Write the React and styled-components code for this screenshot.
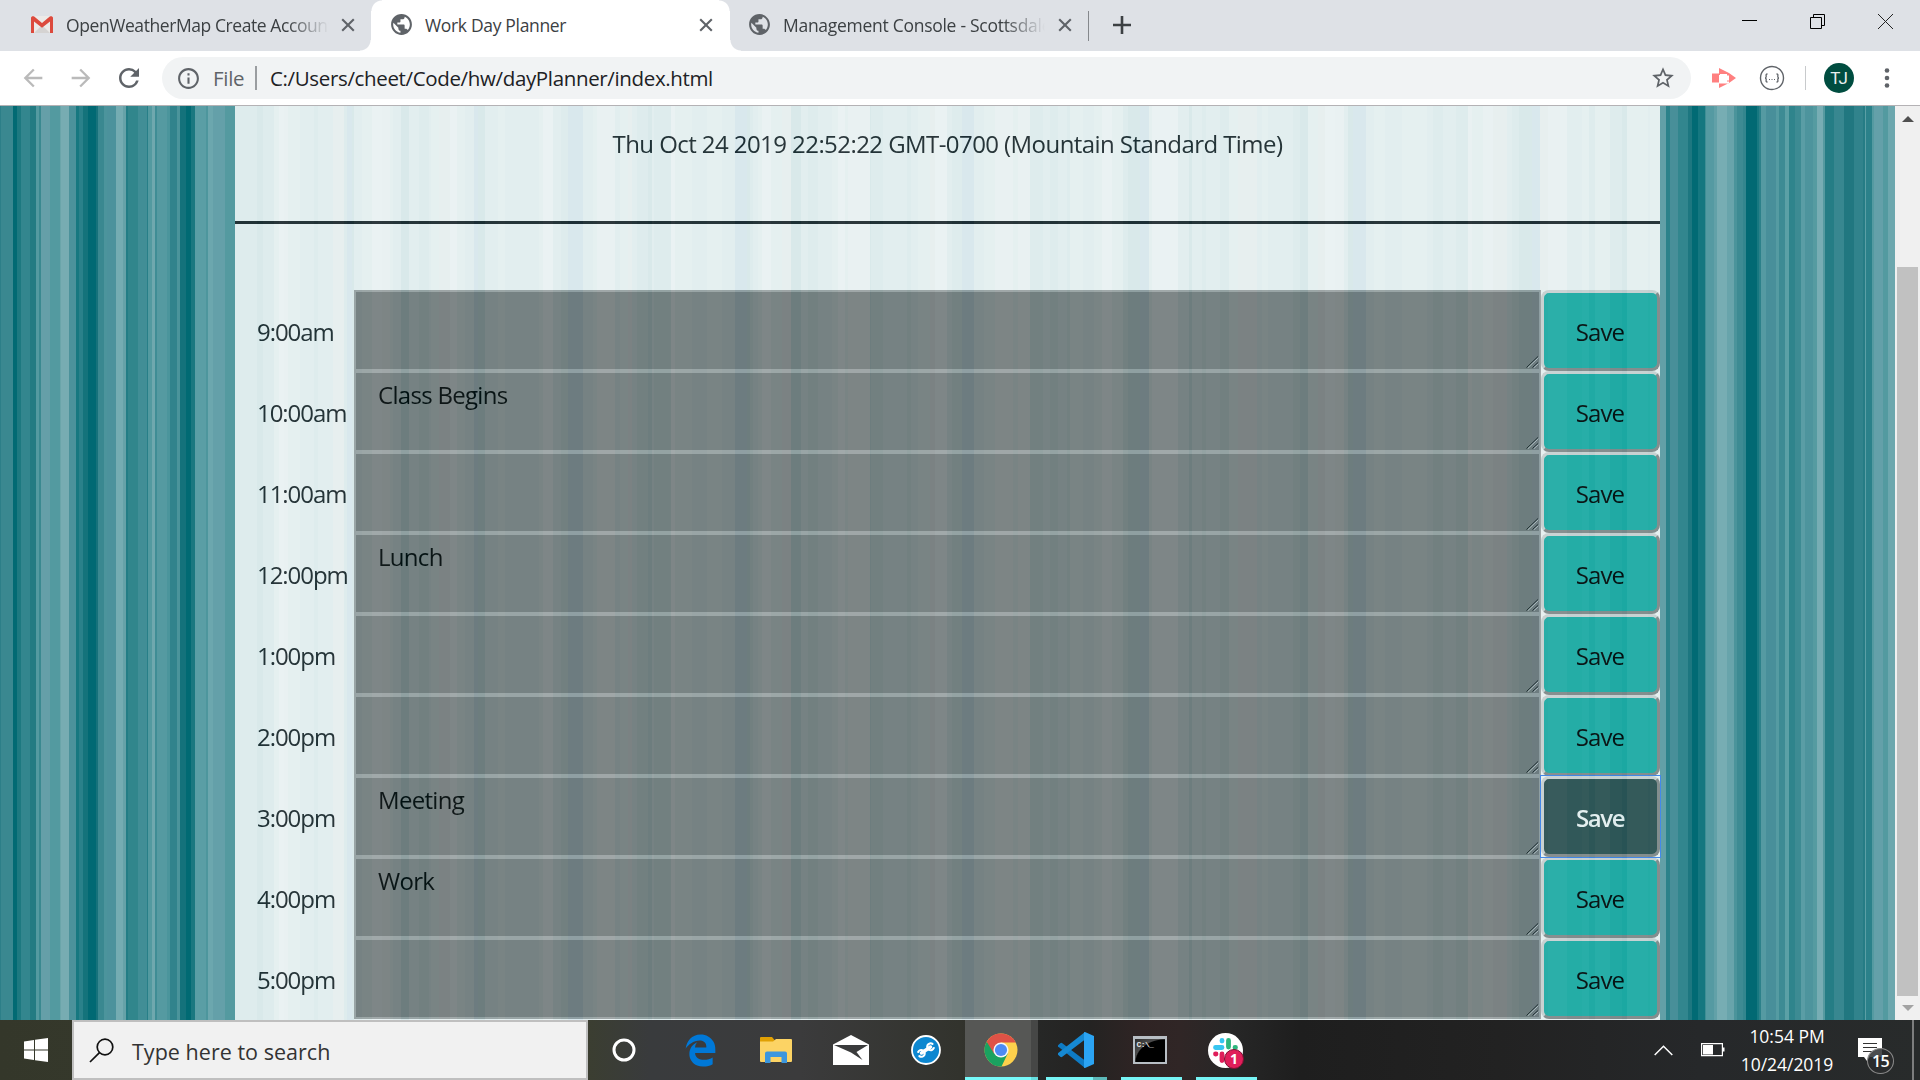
import React from 'react';
import styled, { createGlobalStyle, css } from 'styled-components';
import { MdPublic, MdStarBorder, MdInfoOutline, MdArrowBack, MdArrowForward, MdRefresh } from 'react-icons/md';
import { FaEdgeLegacy } from 'react-icons/fa6';

const GlobalStyle = createGlobalStyle`
  * { box-sizing: border-box; }
  body { margin: 0; overflow: hidden; background: #fff; font-family: "Open Sans", "Noto Sans", sans-serif; }
`;

/* ---------- striped wallpaper ---------- */

const LEFT = [
  [0, '#2c7f88'], [1, '#3a8890'], [13, '#016a73'], [17, '#1d7980'], [21, '#33868e'], [30, '#237b82'],
  [36, '#549aa0'], [39, '#3a8990'], [41, '#659fa8'], [50, '#539aa0'], [60, '#6aa5aa'], [61, '#77acb2'],
  [69, '#4c929b'], [76, '#177880'], [79, '#2a818a'], [83, '#14737b'], [88, '#016973'], [96, '#16727b'],
  [98, '#3a8890'], [104, '#4c949c'], [107, '#4c929c'], [116, '#75acb2'], [123, '#66a2a8'], [126, '#237d85'],
  [128, '#31868c'], [138, '#418e96'], [147, '#277f88'], [148, '#539aa0'], [152, '#6fa8ae'], [155, '#3f8d95'],
  [157, '#559aa1'], [167, '#4b959c'], [170, '#31838c'], [177, '#4b949b'], [180, '#14727b'], [186, '#016a73'],
  [191, '#1a7880'], [195, '#5a9ea5'], [206, '#4d969d'], [208, '#6ca7ae'], [213, '#64a0a9'], [225, '#549aa0'],
];

const RIGHT = [
  [1660, '#62a0a7'], [1666, '#2b828a'], [1670, '#488f99'], [1678, '#32868e'], [1688, '#1d7780'], [1692, '#016a74'],
  [1698, '#157780'], [1705, '#3f8e95'], [1706, '#559aa2'], [1714, '#62a1a8'], [1717, '#77adb3'], [1727, '#68a4ab'],
  [1734, '#4b949b'], [1737, '#3d8b93'], [1743, '#33868e'], [1746, '#016973'], [1757, '#177880'], [1759, '#2c818a'],
  [1761, '#559aa2'], [1766, '#488f9a'], [1776, '#559ba2'], [1779, '#3d8b94'], [1785, '#5ba0a6'], [1789, '#2f848c'],
  [1795, '#3d8b93'], [1801, '#5a9da5'], [1805, '#4d949d'], [1813, '#559ba1'], [1817, '#77adb4'], [1823, '#559aa0'],
  [1825, '#257d85'], [1834, '#388790'], [1844, '#217780'], [1854, '#31838c'], [1863, '#257c85'], [1865, '#5b9fa5'],
  [1866, '#2b818a'], [1872, '#559aa1'], [1874, '#64a0a9'], [1883, '#539aa0'], [1888, '#6ca7ae'],
];

const TONES = {
  A: '#78aab0', a: '#6ea2a8', B: '#559d9e', C: '#419195', D: '#228286', E: '#007078', F: '#006886', G: '#609498',
};

/* thirds of a pixel from the start of each block, followed by a tone */
const BLOCKS = [
  [235, '0D 27D 65E 85D 118B 132A 147a 160B 195C 238D 250C 295G 328D 335F 350E 357C 380B 410A 440a 465B 475C 498E 523C 553D 582C 587B 612G 645A 665B 690C 716F 730E 750C 790B 810C 912B 925A 955C 978D 998F 1045C 1073B 1085a 1140C 1155B 1180G 1192C 1205D 1238E 1250C 1258D 1308A 1320B 1372C 1415B'],
  [715, '0B 20C 60F 82F 97E 105D 115C 130B 140A 168B 200G 227E 257C 280D 310C 350B 370A 390B 400a 465E 469D 505C 575D 588C 610B 645G 660A 695C 710D 740F 777C 807B 840a 895B 910a 945D 985C 1005D 1030C 1055D 1065B 1103C 1137B 1160A 1190B 1225D 1240E 1275F 1301B 1310A 1390C'],
  [1185, '0C 12E 20C 50D 63C 105D 132B 160G 215C 232B 250C 325D 345E 370B 398G 420A 450a 478C 490E 505F 543C 567B 600C 650B 725C 745D 775C 812D 848a 862B 895a 925G 965C 980D 1002E 1040F 1065G 1090a 1145C 1190B 1212D 1230B 1275D 1310E 1325B 1390C 1395B'],
];

const middle = BLOCKS.flatMap(([start, list]) =>
  list.split(' ').map((s) => [start + parseInt(s, 10) / 3, TONES[s[s.length - 1]]])
);

const stripes = [...LEFT, ...middle, ...RIGHT];
const wallpaper = `linear-gradient(90deg, ${stripes
  .map(([x, c], i) => `${c} ${x.toFixed(1)}px ${(i + 1 < stripes.length ? stripes[i + 1][0] : 1895).toFixed(1)}px`)
  .join(', ')})`;

/* ---------- shell ---------- */

const Screen = styled.div`
  width: 1920px;
  height: 1080px;
  display: flex;
  flex-direction: column;
  overflow: hidden;
`;

const TabStrip = styled.header`
  height: 51px;
  display: flex;
  background: #dee1e6;
  color: #3c4043;
`;

const Tab = styled.div`
  width: ${(p) => p.$w}px;
  height: 51px;
  padding: 0 ${(p) => p.$pr}px 2px ${(p) => p.$pl}px;
  display: flex;
  align-items: center;
  flex: none;
  ${(p) => p.$active && css`
    background:
      radial-gradient(circle at 0 0, #dee1e6 10px, #fff 11px) 0 100% / 11px 11px no-repeat,
      radial-gradient(circle at 100% 0, #dee1e6 10px, #fff 11px) 100% 100% / 11px 11px no-repeat,
      radial-gradient(circle at 100% 100%, #fff 10px, #dee1e6 11px) 11px 0 / 11px 11px no-repeat,
      radial-gradient(circle at 0 100%, #fff 10px, #dee1e6 11px) calc(100% - 11px) 0 / 11px 11px no-repeat,
      linear-gradient(#fff, #fff) 11px 0 / calc(100% - 22px) 100% no-repeat;
  `}
`;

const TabTitle = styled.span`
  flex: 1;
  min-width: 0;
  margin-left: ${(p) => p.$gap}px;
  font-size: 17.5px;
  line-height: 26px;
  letter-spacing: ${(p) => p.$ls}px;
  white-space: nowrap;
  overflow: hidden;
  ${(p) => p.$fade && css`
    mask-image: linear-gradient(90deg, #000 calc(100% - 42px), transparent);
  `}
`;

const IconBox = styled.span`
  display: flex;
  align-items: center;
  justify-content: center;
  flex: none;
  width: ${(p) => p.$w}px;
  margin-left: ${(p) => p.$ml || 0}px;
  color: ${(p) => p.$c || '#5f6368'};
`;

const Rule = styled.i`
  flex: none;
  width: ${(p) => p.$w || 1}px;
  height: ${(p) => p.$h}px;
  margin-left: ${(p) => p.$ml}px;
  margin-top: ${(p) => p.$mt || 0}px;
  background: ${(p) => p.$c};
`;

const WindowButtons = styled.div`
  margin-left: auto;
  display: flex;
  gap: 53px;
  padding: 14px 27px 0 0;
  height: 29px;
`;

const Toolbar = styled.nav`
  height: 55px;
  display: flex;
  align-items: center;
  background: #fff;
  border-bottom: 1px solid #b4b2b5;
`;

const Omnibox = styled.div`
  width: 1529px;
  height: 42px;
  margin-left: 18px;
  padding: 0 15px 0 14px;
  border-radius: 21px;
  background: #f1f3f4;
  display: flex;
  align-items: center;
  font-size: 20.5px;
  color: #202124;
  white-space: nowrap;
`;

const Scheme = styled.span`
  color: #5f6368;
  margin-left: 12px;
  width: 31px;
  letter-spacing: -0.3px;
`;

const Url = styled.span`
  margin-left: 13px;
  flex: 1;
  letter-spacing: -0.35px;
`;

const Avatar = styled.span`
  width: 30px;
  height: 30px;
  margin-left: 18px;
  border-radius: 50%;
  background: #004d40;
  color: #e8f0ee;
  font: 17px/30px Roboto, sans-serif;
  text-align: center;
`;

/* ---------- page ---------- */

const Viewport = styled.main`
  height: 914px;
  display: flex;
  background: #fff ${wallpaper} 0 0 / 1895px 100% no-repeat;
`;

const Planner = styled.section`
  width: 1425px;
  margin-left: 235px;
  background: #fff;
  color: #212529;
  opacity: 0.85;
  font-size: 24px;
`;

const Stamp = styled.p`
  margin: 0;
  height: 118px;
  padding-top: 19px;
  border-bottom: 3px solid #212529;
  line-height: 38px;
  text-align: center;
  letter-spacing: -0.57px;
`;

const Slots = styled.div`
  padding-top: 66px;
`;

const Slot = styled.div`
  height: 81px;
  display: flex;
`;

const Hour = styled.label`
  width: 119px;
  padding-left: 22px;
  line-height: 84px;
  letter-spacing: -1.05px;
  white-space: nowrap;
`;

const Field = styled.div`
  position: relative;
  width: 1187px;
  height: 81px;
`;

const Entry = styled.textarea`
  display: block;
  width: 100%;
  height: 100%;
  padding: 3px 22px;
  border: 2px solid #a9a9a9;
  background: #808080;
  color: #000;
  font: 24px/38px "Open Sans", "Noto Sans", sans-serif;
  letter-spacing: -0.7px;
  resize: none;
  outline: none;
`;

const Grip = styled.svg`
  position: absolute;
  right: 2px;
  bottom: 3px;
`;

const Save = styled.button`
  width: 119px;
  height: 81px;
  padding: 2px 1px 0 0;
  border: 3px solid;
  border-color: #dcdcdc #8c8c8c #8c8c8c #dcdcdc;
  border-radius: 8px;
  background: ${(p) => (p.$on ? '#2f4f4f' : '#20b2aa')};
  color: ${(p) => (p.$on ? '#fff' : '#000')};
  font: ${(p) => (p.$on ? 600 : 400)} 24px/38px "Open Sans", "Noto Sans", sans-serif;
  letter-spacing: ${(p) => (p.$on ? -1.4 : -0.9)}px;
`;

const FocusFrame = styled.div`
  width: 119px;
  height: 81px;
  display: flex;
  ${(p) => p.$on && css`
    position: relative;
    z-index: 1;
    outline: 1px solid #3f85f5;
  `}
`;

const ScrollTrack = styled.aside`
  width: 25px;
  margin-left: 235px;
  background: #f0f0f0;
  display: flex;
  flex-direction: column;
  align-items: center;
`;

const Thumb = styled.div`
  width: 21px;
  height: 729px;
  margin-top: 145px;
  background: #c1c1c1;
`;

const Arrow = styled.i`
  width: 0;
  margin-top: ${(p) => p.$mt}px;
  border: 6px solid transparent;
  ${(p) => (p.$down ? 'border-top-color: #a3a3a3; border-bottom: 0;' : 'border-bottom-color: #505050; border-top: 0;')}
`;

/* ---------- taskbar ---------- */

const Taskbar = styled.footer`
  height: 60px;
  display: flex;
  color: #fff;
  background: linear-gradient(90deg, #34372a 0, #3b3e31 588px, #393b3d 650px, #3b3b3c 800px, #32332d 960px,
    #262726 1040px, #242322 1090px, #2f2424 1140px, #302626 1180px, #272727 1230px, #1e1e1e 1300px,
    #222222 1500px, #26282a 1700px, #282b2b 1920px);
`;

const Start = styled.div`
  width: 72px;
  display: flex;
  align-items: center;
  justify-content: center;
`;

const Search = styled.div`
  width: 516px;
  border: 2px solid #bfbfbf;
  background: #f1f1f1;
  color: #333;
  display: flex;
  align-items: center;
  padding-left: 15px;
  font-size: 21.5px;
  letter-spacing: 0.03px;
`;

const SearchText = styled.span`
  margin-left: 18px;
  padding-top: 2px;
`;

const AppSlot = styled.div`
  width: 75px;
  height: 60px;
  padding-right: ${(p) => p.$pr || 0}px;
  display: flex;
  align-items: center;
  justify-content: center;
  flex: none;
  ${(p) => p.$line && css`
    background-image: ${p.$hot
      ? 'linear-gradient(90deg, transparent 2px, #76fafb 2px 68px, #66dedf 68px 75px), linear-gradient(90deg, transparent 2px, #565755 2px 68px, #464746 68px 75px)'
      : p.$multi
        ? 'linear-gradient(90deg, transparent 8px, #76f4f5 8px 55px, #5cb9b9 55px 69px, transparent 69px)'
        : 'linear-gradient(90deg, transparent 8px, #76f4f5 8px 69px, transparent 69px)'};
    background-repeat: no-repeat;
    background-position: 0 100%, 0 0;
    background-size: 100% 3px, 100% 57px;
  `}
`;

const Tray = styled.div`
  margin-left: auto;
  display: flex;
  align-items: center;
`;

const Clock = styled.div`
  width: 100px;
  margin-left: 12px;
  margin-right: 1px;
  padding-bottom: 1px;
  font-size: 17.5px;
  line-height: 28px;
  letter-spacing: -0.03px;
  text-align: center;
  white-space: nowrap;
`;

const Notices = styled.div`
  position: relative;
  width: 38px;
  height: 60px;
  margin-left: 20px;
`;

const Count = styled.span`
  position: absolute;
  left: 9px;
  top: 28px;
  width: 27px;
  height: 26px;
  border: 1px solid #8b8b8b;
  border-radius: 50%;
  background: #2b2d2ed8;
  font-size: 16px;
  font-weight: 600;
  line-height: 24px;
  letter-spacing: -0.6px;
  text-align: center;
`;

/* ---------- drawings ---------- */

const Gmail = () => (
  <svg width="22" height="17" viewBox="0 0 22 17">
    <rect width="22" height="17" rx="1.5" fill="#eceae8" />
    <path d="M3 17 11 9l8 8z" fill="#d5d3d2" />
    <path d="M0 1.8V17h3V5.6l8 6.2 8-6.2V17h3V1.8C22 .3 20 -.4 18.8.6L11 6.900 3.200.6C2-.4 0 .3 0 1.800z" fill="#dc4a3d" />
  </svg>
);

const Magnifier = () => (
  <svg width="25" height="25" viewBox="0 0 25 25" fill="none" stroke="#111" strokeWidth="1.7">
    <circle cx="16" cy="9" r="7.800" />
    <path d="M10.500 14.600 1 24" />
  </svg>
);

const Windows = () => (
  <svg width="24" height="24" viewBox="0 0 24 24" fill="#fff">
    <path d="M0 3.400 10 2v9.500H0zM11 1.800 24 0v11.500H11zM0 12.500h10V22L0 20.600zM11 12.500h13V24l-13-1.800z" />
  </svg>
);

const Folder = () => (
  <svg width="32" height="28" viewBox="0 0 32 28">
    <path d="M0 2a1 1 0 0 1 1-1h11l3 3.500V8H0z" fill="#e0a004" />
    <path d="M0 5.500h13L16 3h15a1 1 0 0 1 1 1v21a1 1 0 0 1-1 1H1a1 1 0 0 1-1-1z" fill="#fcd364" />
    <path d="M5 27V17.500a2 2 0 0 1 2-2h18a2 2 0 0 1 2 2V27h-5.500v-6h-11v6z" fill="#3c96de" />
  </svg>
);

const Mail = () => (
  <svg width="36" height="30" viewBox="0 0 36 30">
    <path d="M0 9.500 18 0l18 9.500V30H0z" fill="#fff" />
    <path d="M1 10h34L23.500 17l6 8L18 17.500z" fill="#3a3b3c" />
  </svg>
);

const Chrome = () => (
  <svg width="34" height="34" viewBox="0 0 34 34">
    <circle cx="17" cy="17" r="16.500" fill="#fdd04c" />
    <path d="M17 17 2.700 8.800A16.500 16.500 0 0 0 17.500 33.500L24 20z" fill="#1aa260" />
    <path d="M2.700 8.800A16.500 16.500 0 0 1 31.800 9.500H17l-7 11z" fill="#de5246" />
    <circle cx="17" cy="17" r="7.600" fill="#f4f6f8" />
    <circle cx="17" cy="17" r="6.100" fill="#4c8bf5" />
  </svg>
);

const Code = () => (
  <svg width="36" height="36" viewBox="0 0 36 36">
    <path d="M0 13.300 2.300 11.200a1.500 1.500 0 0 1 2 0L27 28.500V36L1 15.200a1.300 1.300 0 0 1-1-1.900z" fill="#0e7bc4" />
    <path d="M0 22.700 2.300 24.800a1.500 1.500 0 0 0 2 0L27 7.500V0L.5 20.800a1.300 1.300 0 0 0-.5 1.900z" fill="#1689d2" />
    <path d="M27 0 36 4v28l-9 4c-.7 0-1-.3-1-1V1c0-.7.3-1 1-1z" fill="#2ba4f3" />
  </svg>
);

const Prompt = styled.div`
  width: 34px;
  height: 28px;
  border: 2px solid #b8bec4;
  border-top-width: 3px;
  background: radial-gradient(ellipse at 100% 100%, #000 68%, #4c4c4c 71%, #2b2b2b 100%);
  color: #e6e6e6;
  font: 700 8px/10px "Liberation Mono", monospace;
  letter-spacing: -0.6px;
  padding: 1px 0 0 2px;
`;

const SlackWrap = styled.div`
  position: relative;
  width: 35px;
  height: 35px;
`;

const SlackBadge = styled.b`
  position: absolute;
  left: 16px;
  top: 16px;
  width: 20px;
  height: 20px;
  border: 1px solid #7c0f31;
  border-radius: 50%;
  background: #e01e5a;
  font-size: 14px;
  line-height: 18px;
  text-align: center;
`;

const SlackMark = () => (
  <svg width="35" height="35" viewBox="0 0 35 35">
    <circle cx="17.500" cy="17.500" r="17.500" fill="#fff" />
    <g strokeWidth="4.800" strokeLinecap="round" fill="none">
      <path d="M7.500 14.500h6.500M14 7.500v.5" stroke="#36c5f0" />
      <path d="M20.500 7.500v6.500M27 14.500h.5" stroke="#2eb67d" />
      <path d="M14 21v6.500M7.500 21h.5" stroke="#e01e5a" />
      <path d="M21 21h6" stroke="#ecb22e" />
    </g>
  </svg>
);

const CloseMark = () => (
  <svg width="14" height="14" stroke="#5f6368" strokeWidth="2.1">
    <path d="M1.200 1.200 12.800 12.800M12.800 1.200 1.200 12.800" />
  </svg>
);

const hours = [
  ['9:00am', ''], ['10:00am', 'Class Begins'], ['11:00am', ''], ['12:00pm', 'Lunch'], ['1:00pm', ''],
  ['2:00pm', ''], ['3:00pm', 'Meeting'], ['4:00pm', 'Work'], ['5:00pm', ''],
];

export default function App() {
  return (
    <Screen>
      <GlobalStyle />
      <TabStrip>
        <Tab $w={360} $pl={31} $pr={2}>
          <Gmail />
          <TabTitle $gap={13} $ls={-0.42} $fade>OpenWeatherMap Create Account</TabTitle>
          <IconBox $w={20} $ml={9}><CloseMark /></IconBox>
        </Tab>
        <Tab $w={381} $pl={29} $pr={25} $active>
          <IconBox $w={25}><MdPublic size={25} /></IconBox>
          <TabTitle $gap={11} $ls={-0.33}>Work Day Planner</TabTitle>
          <IconBox $w={20}><CloseMark /></IconBox>
        </Tab>
        <Tab $w={348} $pl={6} $pr={14}>
          <IconBox $w={25}><MdPublic size={25} /></IconBox>
          <TabTitle $gap={11} $ls={-0.28} $fade>Management Console - Scottsdale</TabTitle>
          <IconBox $w={20} $ml={10}><CloseMark /></IconBox>
        </Tab>
        <Rule $h={30} $ml={-1} $mt={11} $c="#85888c" />
        <IconBox $w={26} $ml={20}>
          <svg width="18" height="20" stroke="#3c4043" strokeWidth="2.6"><path d="M0 9h18M9 0v18" /></svg>
        </IconBox>
        <WindowButtons>
          <svg width="15" height="15"><path d="M0 6.500h15" stroke="#000" /></svg>
          <svg width="15" height="15" fill="none" stroke="#000"><path d="M.5 3.500h11v11H.5zM3.500 3.500v-3h11v11h-3" /></svg>
          <svg width="15" height="15" fill="none" stroke="#222"><path d="M0 0l15 15M15 0 0 15" /></svg>
        </WindowButtons>
      </TabStrip>
      <Toolbar>
        <IconBox $w={28} $ml={19} $c="#bababa"><MdArrowBack size={28} /></IconBox>
        <IconBox $w={28} $ml={20} $c="#bababa"><MdArrowForward size={28} /></IconBox>
        <IconBox $w={30} $ml={19}><MdRefresh size={30} /></IconBox>
        <Omnibox>
          <IconBox $w={25}><MdInfoOutline size={25} /></IconBox>
          <Scheme>File</Scheme>
          <Rule $w={2} $h={24} $ml={11} $c="#9a9da0" />
          <Url>C:/Users/cheet/Code/hw/dayPlanner/index.html</Url>
          <IconBox $w={26}><MdStarBorder size={26} /></IconBox>
        </Omnibox>
        <IconBox $w={24} $ml={21}>
          <svg width="24" height="20" viewBox="0 0 24 20" fill="#ff8080">
            <path d="M0 5.500h7v9H0z" />
            <path d="M7 0 17 5l7 5-7 5-10 5v-4.500h10v-2h-2v-2h2v-3h-2v-1.500H7z" />
            <path d="M8 6h7v1.500h2v5h-2V15H8z" fill="#fff" />
          </svg>
        </IconBox>
        <IconBox $w={26} $ml={23}>
          <svg width="26" height="26" viewBox="0 0 26 26" fill="none" stroke="#5f6368">
            <circle cx="13" cy="13" r="11.500" strokeWidth="1.400" />
            <path d="M8.500 9c-2 0-1.300 1.500-1.300 2.500S7 13 6 13c1 0 1.200.5 1.200 1.500S6.500 17 8.500 17M17.500 9c2 0 1.300 1.500 1.300 2.500S19 13 20 13c-1 0-1.200.5-1.200 1.500s.7 2.500-1.300 2.500" strokeWidth="1.300" />
            <path d="M10 14.500h6.500" strokeDasharray="1 1.500" />
          </svg>
        </IconBox>
        <Rule $h={24} $ml={20} $c="#c8cacc" />
        <Avatar>TJ</Avatar>
        <IconBox $w={6} $ml={30}>
          <svg width="6" height="21" fill="#5f6368"><circle cx="3" cy="2.500" r="2.300" /><circle cx="3" cy="10" r="2.300" /><circle cx="3" cy="17.500" r="2.300" /></svg>
        </IconBox>
      </Toolbar>
      <Viewport>
        <Planner>
          <Stamp>Thu Oct 24 2019 22:52:22 GMT-0700 (Mountain Standard Time)</Stamp>
          <Slots>
            {hours.map(([time, task]) => (
              <Slot key={time}>
                <Hour>{time}</Hour>
                <Field>
                  <Entry defaultValue={task} spellCheck={false} />
                  <Grip width="13" height="12" fill="none">
                    <path d="M.5 11.500 12 .5M6.500 11.500l5.500-5" stroke="#222" />
                    <path d="M1.800 11.800 12.500 1.600M7.800 11.800l4.700-4.200" stroke="#ddd" strokeWidth=".8" />
                  </Grip>
                </Field>
                <FocusFrame $on={time === '3:00pm'}>
                  <Save $on={time === '3:00pm'}>Save</Save>
                </FocusFrame>
              </Slot>
            ))}
          </Slots>
        </Planner>
        <ScrollTrack>
          <Arrow $mt={10} />
          <Thumb />
          <Arrow $down $mt={9} />
        </ScrollTrack>
      </Viewport>
      <Taskbar>
        <Start><Windows /></Start>
        <Search>
          <Magnifier />
          <SearchText>Type here to search</SearchText>
        </Search>
        <AppSlot $pr={4}><svg width="24" height="24"><circle cx="12" cy="12" r="10" fill="none" stroke="#fff" strokeWidth="3" /></svg></AppSlot>
        <AppSlot><FaEdgeLegacy size={33} color="#0078d7" /></AppSlot>
        <AppSlot><Folder /></AppSlot>
        <AppSlot><Mail /></AppSlot>
        <AppSlot>
          <svg width="30" height="30" viewBox="0 0 30 30">
            <circle cx="15" cy="15" r="14" fill="#0d87d0" stroke="#fff" strokeWidth="1.800" />
            <g transform="rotate(8 15 15)" stroke="#fff" strokeLinecap="round" fill="none">
              <path d="M11 18.500 19 11.500" strokeWidth="3.600" />
              <path d="M21.500 6.900a4 4 0 1 0 2.200 4.500M8.300 23.200a4 4 0 1 0-2-4.600" strokeWidth="2.400" transform="translate(15 15) scale(.86) translate(-15 -15)" />
            </g>
          </svg>
        </AppSlot>
        <AppSlot $hot $line><Chrome /></AppSlot>
        <AppSlot $line $multi><Code /></AppSlot>
        <AppSlot $line $pr={2}><Prompt>C:\_</Prompt></AppSlot>
        <AppSlot $line><SlackWrap><SlackMark /><SlackBadge>1</SlackBadge></SlackWrap></AppSlot>
        <Tray>
          <svg width="19" height="11" fill="none" stroke="#fff" strokeWidth="1.500"><path d="M.7 10 9.500 1.200 18.300 10" /></svg>
          <IconBox $w={24} $ml={28}>
            <svg width="24" height="14"><path d="M.6.6h20.800v12H.6z" fill="none" stroke="#fff" strokeWidth="1.200" /><path d="M2 2h10v9.500H2zM22 4.500h1.500v4H22z" fill="#fff" /></svg>
          </IconBox>
          <Clock>10:54 PM<br />10/24/2019</Clock>
          <Notices>
            <svg width="38" height="60">
              <path d="M0 18h24v19H12l-3 4-3-4H0z" fill="#fff" />
              <path d="M5 23.500h14M5 27.500h14M5 31.500h9" stroke="#333" />
            </svg>
            <Count>15</Count>
          </Notices>
          <Rule $w={2} $h={60} $ml={16} $c="#7d7e7e" />
          <Rule $w={6} $h={60} $ml={0} $c="transparent" />
        </Tray>
      </Taskbar>
    </Screen>
  );
}
